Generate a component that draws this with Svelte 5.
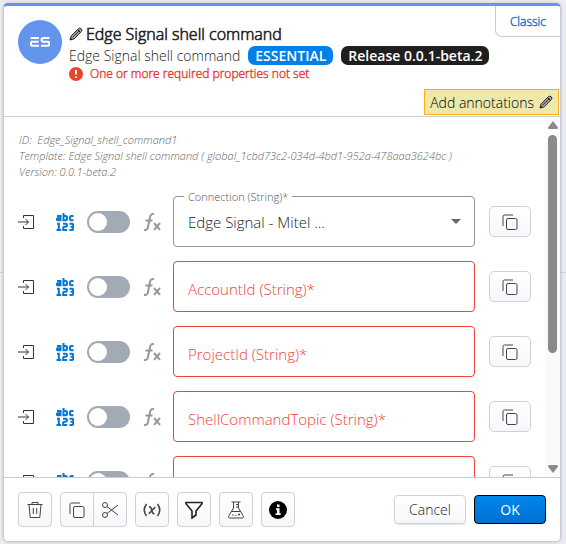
<script>

	/* data */

	const fields = [
		{ id: 'connection', label: 'Connection (String)*', value: 'Edge Signal - Mitel ...' },
		{ id: 'accountId', label: 'AccountId (String)*' },
		{ id: 'projectId', label: 'ProjectId (String)*' },
		{ id: 'topic', label: 'ShellCommandTopic (String)*' },
		{ id: 'extra', label: '' }
	];

	let values = $state({ accountId: '', projectId: '', topic: '', extra: '' });


	/* scrolling */

	let scroller;
	let viewHeight = $state(1);
	let contentHeight = $state(1);
	let scrollTop = $state(0);

	let thumbSize = $derived(Math.min(100, (viewHeight / contentHeight) * 100));
	let thumbStart = $derived((scrollTop / contentHeight) * 100);

	function scrollStep(step) {
		scroller.scrollBy({ top: step });
	}

</script>

{#snippet pencil()}
	<svg class="pencil" viewBox="0 0 14 14" aria-hidden="true">
		<path d="M1 13 2.2 8.8 9.6 1.6Q10.8.6 12.2 1.8T12.4 4.4L5.2 11.8Z" fill="#aaa" stroke="#222" stroke-linejoin="round" />
		<path d="M3.6 10.2 10.6 3.2M8.6 2.6l2.8 2.8" stroke="#222" fill="none" />
		<path d="M1 13l.7-2.4 1.7 1.7Z" fill="#222" />
	</svg>
{/snippet}

{#snippet copyIcon()}
	<svg class="copy" viewBox="0 0 16 16" aria-hidden="true">
		<path d="M1 12V2.5Q1 1 2.5 1H11" />
		<rect x="4.5" y="4.5" width="10.5" height="11" rx="1.5" />
	</svg>
{/snippet}

<main>
	<section class="dialog">

		<header>
			<button class="classic">Classic</button>
			<div class="intro">
				<div class="avatar">
					<svg viewBox="0 0 20 10" role="img" aria-label="Edge Signal">
						<path d="M.5 1H9M1 4.8h7.5M1 4.8v2.4Q1 8.8 2.6 8.8H9M19.5 1h-6Q11.5 1 11.5 2.8t2 2h4q1.800 0 1.800 2t-1.800 2H11" />
					</svg>
				</div>
				<div class="heading">
					<h1>{@render pencil()}Edge Signal shell command</h1>
					<div class="subtitle">
						<span class="kind">Edge Signal shell command</span>
						<span class="tag blue">ESSENTIAL</span>
						<span class="tag dark">Release 0.0.1-beta.2</span>
					</div>
					<div class="warning">
						<svg viewBox="0 0 14 14" aria-hidden="true">
							<circle cx="7" cy="7" r="7" fill="#e8452f" />
							<path d="M7 3v4.600M7 9.500v1.600" stroke="#fff" stroke-width="2" />
						</svg>
						One or more required properties not set
					</div>
				</div>
			</div>
			<button class="annotations">Add annotations {@render pencil()}</button>
		</header>

		<div class="body">
			<div class="scroller" bind:this={scroller} bind:clientHeight={viewHeight} onscroll={() => scrollTop = scroller.scrollTop}>
				<div class="content" bind:clientHeight={contentHeight}>
					<div class="meta">
						<div>ID:&nbsp; Edge_Signal_shell_command1</div>
						<div>Template: Edge Signal shell command ( global_1cbd73c2-034d-4bd1-952a-478aaa3624bc )</div>
						<div>Version: 0.0.1-beta.2</div>
					</div>

					<div class="rows">
						{#each fields as field (field.id)}
							<div class="row">
								<svg class="entry" viewBox="0 0 16 16" aria-hidden="true">
									<path d="M5.500 4V1.500h10v13h-10V12M0 8h10.500M7.500 5l3 3-3 3" />
								</svg>
								<svg class="abc" viewBox="0 0 18 18" aria-hidden="true">
									<path d="M1 3h3.500v4.200H2q-1.200 0-1.200-1T2 5.200h2.500M7.500 0v7.200h2q1.500 0 1.500-1.500V4.500Q11 3 9.500 3h-2M17.500 3h-2Q14 3 14 4.500v1.200q0 1.500 1.500 1.500h2M1 10.800h1.800V17M.5 17h4.700M7 10.800h2.800q1.200 0 1.200 1.400T9.800 13.800H8.500Q7.200 13.800 7.200 15v2h4M13.500 10.800h2.500q1.200 0 1.200 1.500t-1.200 1.500h-1.500 1.500q1.200 0 1.200 1.600T16 17h-2.500" />
								</svg>
								<input class="switch" type="checkbox" role="switch" aria-label="Use expression">
								<svg class="fx" viewBox="0 0 18 18" aria-hidden="true">
									<path d="M11 1.300Q7.700.4 7 4L5 14Q4.300 17.600 1 16.700M2.500 7.500h7M11 10l6 6.800M17 10l-6 6.800" />
								</svg>
								<div class="field" class:invalid={!field.value}>
									{#if field.value}
										<label class="floating" for={field.id}>{field.label}</label>
										<select id={field.id}>
											<option>{field.value}</option>
										</select>
										<svg class="arrow" viewBox="0 0 10 5" aria-hidden="true"><path d="M0 0h10L5 5Z" /></svg>
									{:else}
										<input id={field.id} type="text" placeholder={field.label} aria-label={field.label || 'Value'} bind:value={values[field.id]}>
									{/if}
								</div>
								<button class="btn small" aria-label="Copy">{@render copyIcon()}</button>
							</div>
						{/each}
					</div>
				</div>
			</div>

			<div class="scrollbar">
				<button aria-label="Scroll up" onclick={() => scrollStep(-65)}>
					<svg viewBox="0 0 10 8" aria-hidden="true"><path d="M5 0 10 6.500Q10 8 9 8H1Q0 8 0 6.500Z" /></svg>
				</button>
				<div class="track">
					<div class="thumb" style="height: {thumbSize}%; top: {thumbStart}%"></div>
				</div>
				<button aria-label="Scroll down" onclick={() => scrollStep(65)}>
					<svg viewBox="0 0 10 8" aria-hidden="true"><path d="M5 8 10 1.500Q10 0 9 0H1Q0 0 0 1.500Z" /></svg>
				</button>
			</div>
		</div>

		<footer>
			<button class="btn tool" aria-label="Delete">
				<svg viewBox="0 0 18 18" aria-hidden="true">
					<path d="M1.500 3.500h15M6 3.500v-2h6v2M3 3.500 4.200 16.500h9.600L15 3.500M7.300 7v6M10.700 7v6" />
				</svg>
			</button>
			<div class="group">
				<button class="btn tool" aria-label="Copy">{@render copyIcon()}</button>
				<button class="btn tool" aria-label="Cut">
					<svg viewBox="0 0 18 18" aria-hidden="true">
						<circle cx="4" cy="4" r="2.500" />
						<circle cx="4" cy="14" r="2.500" />
						<path d="M6 5.500 17 14M6 12.500 17 4" />
					</svg>
				</button>
			</div>
			<button class="btn tool" aria-label="Variables">
				<svg class="bold" viewBox="0 0 18 18" aria-hidden="true">
					<path d="M3.500 3Q-1 9 3.500 15M14.500 3Q19 9 14.500 15M6 6q1.500-.5 2.200 1.500l1.300 4q.5 1.500 2 1M12.300 6 5.800 12.700" />
				</svg>
			</button>
			<button class="btn tool" aria-label="Filter">
				<svg class="bold dark" viewBox="0 0 18 18" aria-hidden="true">
					<path d="M1 1.500h16v1.300L11 10v4L7 17V10L1 2.800Z" />
				</svg>
			</button>
			<button class="btn tool" aria-label="Test">
				<svg viewBox="0 0 18 18" aria-hidden="true">
					<path d="M4.500 1h9M6.500 1v6L1.500 15.500Q1.200 17 2.800 17h12.400q1.600 0 1.300-1.500L11.500 7V1M4.500 10.500h9M9 3.500h2.500M9 6h2.500M5 14h1.500M8.500 14.500h1M11 13.500h2M12 12.500v2" />
				</svg>
			</button>
			<button class="btn tool" aria-label="Information">
				<svg class="info" viewBox="0 0 18 18" aria-hidden="true">
					<circle cx="9" cy="9" r="9" fill="#000" stroke="none" />
					<path d="M8 3.500h2.500v2.500H8zM7 7.200h3.500v5.100h1.200v1.800H6.500v-1.800H8V9H7z" fill="#fff" stroke="none" />
				</svg>
			</button>
			<button class="btn action cancel">Cancel</button>
			<button class="btn action ok">OK</button>
		</footer>

	</section>
</main>

<style>
	/* ---------- PAGE ---------- */

:global(body) {
	font-family: "Open Sans", "Noto Sans", sans-serif;
	font-weight: 300;
	color: #222;
	background: linear-gradient(#cdd2df, #cdd2df) 0 50% / 100% 1px no-repeat #ececef;
}

main {
	box-sizing: border-box;
	height: 100vh;
	padding: 3px 5px 2px 3px;
}

.dialog {
	box-sizing: border-box;
	height: 100%;
	display: flex;
	flex-direction: column;
	overflow: hidden;
	background: white;
	border: 1px solid #c5cbdc;
	border-top: 3px solid #6495ed;
	border-radius: 5px;
	box-shadow: 0 0 3px rgba(0, 0, 0, 0.2);
}

button, input, select {
	box-sizing: border-box;
	font: inherit;
	color: inherit;
}

svg {
	flex: none;
	fill: none;
}


/* ---------- HEADER ---------- */

header {
	position: relative;
	display: flex;
	flex-direction: column;
	border-bottom: 1px solid #c9ced6;
}

.intro {
	display: flex;
	gap: 7px;
	padding: 14px 14px 7px;
}

.avatar {
	display: flex;
	align-items: center;
	justify-content: center;
	flex: none;
	width: 44px;
	height: 44px;
	border-radius: 50%;
	background: #6495ed;
}

.avatar svg {
	width: 20px;
	height: 10px;
	stroke: #fff;
	stroke-width: 2;
}

.heading {
	min-width: 0;
}

h1 {
	display: flex;
	align-items: center;
	gap: 3px;
	margin: 3px 0 0;
	font-size: 16px;
	line-height: 22px;
	font-weight: 300;
	-webkit-text-stroke: 0.6px;
	white-space: nowrap;
}

.pencil {
	width: 14px;
	height: 14px;
}

.subtitle {
	display: flex;
	align-items: center;
	gap: 8px;
	font-size: 14px;
	line-height: 21px;
	white-space: nowrap;
}

.tag {
	padding: 0 7px;
	border-radius: 7px;
	line-height: 19px;
	font-weight: 600;
	color: white;
}

.tag.blue {
	background: #0080e8;
}

.tag.dark {
	background: #1f1f1f;
}

.warning {
	display: flex;
	align-items: center;
	gap: 7px;
	font-size: 12px;
	line-height: 16px;
	-webkit-text-stroke: 0.4px;
	color: #e53935;
}

.warning svg {
	width: 14px;
	height: 14px;
}

.classic {
	position: absolute;
	top: 0;
	right: 0;
	height: 31px;
	padding: 0 14px;
	border: solid #c5cbdc;
	border-width: 0 0 1px 1px;
	border-bottom-left-radius: 7px;
	background: white;
	font-size: 12px;
	-webkit-text-stroke: 0.4px;
	color: #0070c0;
}

.annotations {
	display: flex;
	align-items: center;
	align-self: flex-end;
	gap: 5px;
	height: 26px;
	margin: 0 1px 1px 0;
	padding: 0 5px;
	border: 1px solid #fbb017;
	background: #eee8aa;
	font-size: 14px;
	color: #000;
}


/* ---------- BODY ---------- */

.body {
	display: flex;
	flex: 1;
	min-height: 0;
}

.scroller {
	flex: 1;
	min-width: 0;
	overflow-y: auto;
	scrollbar-width: none;
}

.content {
	padding: 15px 14px 144px;
}

.meta {
	padding-left: 1px;
	font-size: 11px;
	line-height: 16px;
	font-style: italic;
	color: #666;
}

.rows {
	display: flex;
	flex-direction: column;
	gap: 14px;
	padding: 16px 0 0;
}

.row {
	display: flex;
	align-items: center;
}

.entry {
	width: 16px;
	height: 16px;
	margin-right: 22px;
	stroke: #333;
}

.abc {
	width: 18px;
	height: 18px;
	margin-right: 13px;
	stroke: #0078d4;
	stroke-width: 2;
}

.fx {
	width: 18px;
	height: 18px;
	margin: 0 12px 0 13px;
	stroke: #9299a0;
	stroke-width: 2;
}

.switch {
	appearance: none;
	display: flex;
	flex: none;
	width: 43px;
	height: 22px;
	margin: 0;
	padding: 2px;
	border-radius: 11px;
	background: #a2abb5;
}

.switch::before {
	content: "";
	width: 18px;
	height: 18px;
	border-radius: 50%;
	background: white;
}

.switch:checked {
	justify-content: flex-end;
	background: #0078d4;
}

.field {
	position: relative;
	flex: 1;
	min-width: 0;
	height: 51px;
	margin-right: 14px;
}

.field input,
.field select {
	appearance: none;
	width: 100%;
	height: 100%;
	padding: 0 14px;
	border: 1px solid #949494;
	border-radius: 4px;
	background: white;
	font-size: 15px;
	outline: none;
}

.field.invalid input {
	padding-top: 4px;
	border-color: #f04438;
}

.field input::placeholder {
	color: #f04438;
	opacity: 1;
}

.floating {
	position: absolute;
	top: -7px;
	left: 11px;
	padding: 0 4px;
	background: white;
	font-size: 11px;
	line-height: 15px;
	color: #555;
}

.arrow {
	position: absolute;
	top: 23px;
	right: 14px;
	width: 10px;
	height: 5px;
	fill: #666;
	pointer-events: none;
}


/* ---------- SCROLLBAR ---------- */

.scrollbar {
	display: flex;
	flex-direction: column;
	flex: none;
	width: 15px;
	background: #fafafa;
}

.scrollbar button {
	display: flex;
	align-items: center;
	justify-content: center;
	height: 16px;
	padding: 0;
	border: none;
	background: transparent;
}

.scrollbar svg {
	width: 10px;
	height: 8px;
	fill: #8a8a8a;
}

.track {
	position: relative;
	flex: 1;
	margin: 2px 0;
}

.thumb {
	position: absolute;
	left: 3px;
	right: 3px;
	border-radius: 5px;
	background: #8a8a8a;
}


/* ---------- BUTTONS ---------- */

.btn {
	display: flex;
	align-items: center;
	justify-content: center;
	flex: none;
	padding: 0;
	border: 1px solid #ccd1dc;
	border-radius: 4px;
	background: linear-gradient(#fff, #f6f7f9);
}

.btn svg {
	width: 18px;
	height: 18px;
	stroke: #444;
}

.btn .copy {
	width: 16px;
	height: 16px;
}

.btn .bold {
	stroke-width: 1.6;
}

.btn .dark {
	stroke: #222;
}

.btn.small {
	width: 42px;
	height: 31px;
	border-radius: 5px;
}

.btn.tool {
	width: 34px;
	height: 35px;
}

.btn.action {
	width: 72px;
	height: 29px;
	font-size: 14px;
}

.btn.cancel {
	margin-left: auto;
	box-shadow: 0 1px 1px rgba(0, 0, 0, 0.1);
}

.btn.ok {
	border-color: #000;
	background: linear-gradient(#0086ea, #0070d2);
	font-weight: 400;
	color: white;
}


/* ---------- FOOTER ---------- */

footer {
	display: flex;
	align-items: center;
	gap: 8px;
	padding: 14px;
	border-top: 1px solid #c9ced6;
}

.group {
	display: flex;
}

.group .btn:first-child {
	border-radius: 4px 0 0 4px;
}

.group .btn:last-child {
	margin-left: -1px;
	border-radius: 0 4px 4px 0;
}

</style>
